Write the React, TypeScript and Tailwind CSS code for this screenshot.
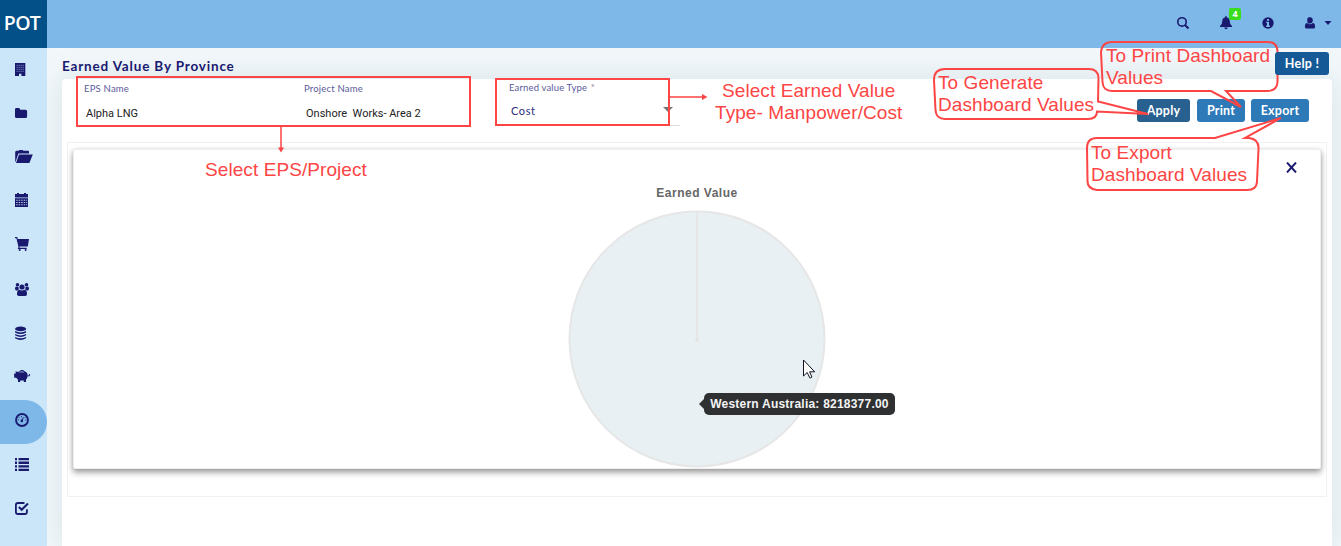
import type { ReactNode } from "react";

const menu: { name: string; art: ReactNode; active?: boolean }[] = [
  {
    name: "Buildings",
    art: (
      <>
        <path d="M15 15h10.3v13H21.4v-2.2h-2.4V28H15z" />
        <g stroke="#cbe6f9" strokeWidth=".9" strokeDasharray=".9 1.1" opacity=".8">
          <path d="M16.7 17.3h7.500M16.7 19.3h7.500M16.7 21.3h7.500M16.7 23.3h7.500" />
        </g>
      </>
    ),
  },
  { name: "Folder", art: <path d="M15 17.4q0-1.4 1.4-1.4h2.4q1.4 0 1.4 1.7h5.4q1.5 0 1.5 1.5v5.3q0 1.5-1.5 1.5h-9.2q-1.4 0-1.4-1.5z" /> },
  {
    name: "Open folder",
    art: <path d="M15.2 26V15.7l1-.9h2.4l.8-.8h3.2l.8.8h5l.6.6v2.2H18.4l-2.8 8.2zM19 18.6h13.8L29.4 27H16z" />,
  },
  {
    name: "Calendar",
    art: (
      <>
        <path d="M15 14h2v-1h2v1h5v-1h2v1h2v3.4H15zM15 18.2h13V27H15z" />
        <g stroke="#cbe6f9" strokeWidth="1.1" strokeDasharray="1.5 1" opacity=".85">
          <path d="M16.2 20.2h11M16.2 22.5h11M16.2 24.8h11" />
        </g>
      </>
    ),
  },
  {
    name: "Cart",
    art: (
      <>
        <path d="M17.3 14.9H29l-1.2 7.600h-8.700z" />
        <path d="M15 13.6h1.8l2.3 9.4-.6 1.4h8.2" fill="none" stroke="currentColor" strokeWidth="1.1" />
        <circle cx="19.7" cy="26" r="1" />
        <circle cx="25.6" cy="26" r="1" />
      </>
    ),
  },
  {
    name: "Users",
    art: (
      <>
        <circle cx="17.5" cy="16.8" r="1.8" />
        <circle cx="26.5" cy="16.8" r="1.8" />
        <circle cx="22" cy="19" r="2.6" />
        <path d="M15 20.5q.2-1.9 1.2-1.9l2.3.4.3 2.6-1.2.8h-1.4q-1.2-.2-1.2-1.9zM29 20.5q-.2-1.9-1.2-1.9l-2.3.4-.3 2.6 1.2.8h1.4q1.2-.2 1.2-1.9zM17 26q0-3.8 2.4-4.2 2.6 1.4 5.2 0Q27 22.200 27 26q0 2-1.700 2h-6.600q-1.700 0-1.700-2z" />
      </>
    ),
  },
  {
    name: "Database",
    art: (
      <>
        <ellipse cx="20.600" cy="16.900" rx="5.500" ry="2.300" />
        <path d="M15.100 19.100q5.500 2.800 11 0v1.300q-5.500 3.400-11 0zM15.100 22q5.500 2.800 11 0v1.300q-5.500 3.400-11 0zM15.100 24.900q5.500 2.800 11 0v1.300q-5.500 3.400-11 0z" />
      </>
    ),
  },
  {
    name: "Savings",
    art: (
      <>
        <path d="M14 17.800l2-.5-.6-2.100 2.500.9q4-2.600 8.200-.1 1.600 1.200 1.600 3.200 0 2.500-1.700 4.200V26h-2.200v-1.500h-3.600V26H18v-2.300l-1.800-1.900H14.300z" />
        <path d="M27.500 19.800q2.600 1 2.200-1.800" fill="none" stroke="currentColor" />
        <path d="M19.500 16.300q2-.9 4.300-.1" fill="none" stroke="#cbe6f9" strokeWidth=".7" />
        <path d="M19.500 14.900q2.500-2 5 0z" />
      </>
    ),
  },
  {
    name: "Dashboard",
    active: true,
    art: (
      <>
        <circle cx="22" cy="20" r="6" fill="none" stroke="currentColor" strokeWidth="1.800" />
        <circle cx="21.800" cy="20.900" r="1.300" />
        <path d="M21.800 20.900l1.600-3.500" fill="none" stroke="currentColor" />
        <path d="M17.600 19.900h1.200M18.800 17.300l.9.900M21.400 16v1.200M24.700 18l.8-.8M25.200 20h1.200" fill="none" stroke="currentColor" strokeWidth=".9" />
      </>
    ),
  },
  {
    name: "List",
    art: (
      <path d="M15 14h2v2.300h-2zM18.500 14H29v2.300H18.500zM15 17.600h2v2.300h-2zM18.500 17.600H29v2.300H18.500zM15 21.200h2v2.300h-2zM18.500 21.200H29v2.300H18.500zM15 24.800h2v2.200h-2zM18.500 24.800H29v2.200H18.500z" />
    ),
  },
  {
    name: "Tasks",
    art: (
      <>
        <path d="M24.500 15H18q-2.100 0-2.100 2.100v6.800q0 2.100 2.100 2.100h6.800q2.100 0 2.100-2.100v-2.600" fill="none" stroke="currentColor" strokeWidth="1.800" />
        <path d="M18.900 18.900l2.800 2.800 6.300-6.100" fill="none" stroke="currentColor" strokeWidth="2.100" />
      </>
    ),
  },
];

function Sidebar() {
  return (
    <nav className="w-[47px] shrink-0 bg-[#cbe6f9]">
      {menu.map((m) => (
        <a
          key={m.name}
          className={
            m.active
              ? "flex h-11 rounded-r-[22px] bg-[#7db8e8] text-[#191970]"
              : "flex h-11 text-[#191970]"
          }
        >
          <svg className="h-11 w-[47px]" viewBox="0 0 47 44" fill="currentColor">
            {m.art}
          </svg>
        </a>
      ))}
    </nav>
  );
}

function Header() {
  return (
    <header className="flex h-12 shrink-0 bg-[#7db8e8]">
      <div className="flex w-[47px] items-center justify-center bg-[#034f87] pr-[3px] pb-0.5 font-['Open_Sans',sans-serif] text-[19.500px] font-semibold tracking-[-0.700px] text-white">
        POT
      </div>
      <div className="flex flex-1 items-center justify-end pb-[2px] text-[#191970]">
        <svg className="mr-[29px] h-3.5 w-3.5" viewBox="0 0 14 14" fill="none" stroke="currentColor">
          <circle cx="6" cy="5.900" r="4.200" strokeWidth="1.600" />
          <path d="M9 9l3.500 3.500" strokeWidth="2" />
        </svg>
        <div className="relative mr-[28px] h-3.5 w-3.5">
          <svg className="h-3.5 w-3.5" viewBox="0 0 14 14" fill="currentColor">
            <path d="M6.400 0h1.200v1.200Q10.600 1.800 10.700 5q.1 3.800 2.300 5v1H1v-1q2.200-1.200 2.300-5 .1-3.200 3.100-3.800zM5.300 11.500h3.400q-.1 1.700-1.700 1.700t-1.700-1.700z" />
          </svg>
          <span className="absolute -top-[8px] left-[10px] flex h-3 w-3 items-center justify-center rounded-[2px] bg-[#39dd1e] font-['Open_Sans',sans-serif] text-[9px] font-bold text-white">
            4
          </span>
        </div>
        <svg className="mr-[28px] h-3.5 w-3.5" viewBox="0 0 14 14">
          <circle cx="7" cy="7" r="5.700" fill="currentColor" />
          <path d="M6 3h2v1.700H6zM5.200 5.700H8v3.900h.9V11H5.100V9.600H6V7h-.8z" fill="#7db8e8" />
        </svg>
        <svg className="mr-[7px] h-3.5 w-3.5" viewBox="0 0 14 14" fill="currentColor">
          <path d="M7 1.300q2.800 0 2.800 2.900T7 7.500 4.200 4.200 7 1.300zM4.100 6.900Q7 9.400 9.900 6.900q2.200.3 2.200 3.800 0 1.900-1.700 1.900H3.600q-1.700 0-1.700-1.900 0-3.500 2.200-3.800z" />
        </svg>
        <svg className="mr-[9px] h-2 w-2" viewBox="0 0 8 8" fill="currentColor">
          <path d="M.5 2h7L4 6z" />
        </svg>
      </div>
    </header>
  );
}

function Filters() {
  return (
    <div className="flex h-[63px] font-['Lato',sans-serif]">
      <div className="flex w-[220px] flex-col pl-[22px]">
        <label className="pt-[4px] text-[9.500px] leading-[11px] tracking-[0.200px] text-[#5a5a9b]">EPS Name</label>
        <span className="pt-[13px] pl-[2px] font-['Roboto',sans-serif] text-[11px] leading-[14px] text-[#222]">Alpha LNG</span>
      </div>
      <div className="mr-[26px] flex h-[47px] w-[189px] flex-col border-b border-[#ddd] pl-[22px]">
        <label className="pt-[4px] text-[9.500px] leading-[11px] tracking-[0.200px] text-[#5a5a9b]">Project Name</label>
        <span className="pt-[13px] pl-[2px] font-['Roboto',sans-serif] text-[11px] leading-[14px] whitespace-pre text-[#222]">
          {"Onshore  Works- Area 2"}
        </span>
      </div>
      <div className="flex h-[47px] w-[183px] flex-col border-b border-[#ddd] pl-[12px]">
        <label className="pt-[3px] text-[9.500px] leading-[11px] tracking-[0.150px] text-[#5a5a9b]">
          Earned value Type <span className="pl-px text-[#8a8a9b]">*</span>
        </label>
        <div className="flex items-center justify-between pt-[10px] pr-[7px] pl-[2px]">
          <span className="text-[11px] leading-[16px] tracking-[0.600px] text-[#2e2e79]">Cost</span>
          <svg className="mb-[4px] h-[5px] w-[10px]" viewBox="0 0 10 5" fill="#757575">
            <path d="M0 0h10L5 5z" />
          </svg>
        </div>
      </div>
      <div className="ml-auto flex gap-[7px] pt-[20px] pr-[23px] text-[12.500px] font-bold tracking-[0.200px] text-white">
        <button className="h-[23px] w-[53px] rounded-[3px] bg-[#286090] pt-[2px]">Apply</button>
        <button className="h-[23px] w-[48px] rounded-[3px] bg-[#2e7ab8] pt-[2px]">Print</button>
        <button className="-ml-px h-[23px] w-[58px] rounded-[3px] bg-[#2e7ab8] pt-[2px]">Export</button>
      </div>
    </div>
  );
}

function ChartCard() {
  return (
    <section className="relative flex h-[320px] flex-col items-center rounded-[2px] border border-[#eee] bg-white shadow-[0_4px_6px_rgba(0,0,0,0.300),0_1px_5px_rgba(0,0,0,0.180)]">
      <svg className="absolute top-[12px] right-[23px] h-[11px] w-[11px]" viewBox="0 0 11 11" fill="none" stroke="#191970" strokeWidth="1.900">
        <path d="M1 .5l9 10M10 .5l-9 10" />
      </svg>
      <h2 className="mt-[35px] text-[12px] leading-[16px] font-bold tracking-[0.500px] text-[#666]">Earned Value</h2>
      <div className="relative mt-[9px] h-[258px] w-[258px]">
        <svg className="h-[258px] w-[258px]" viewBox="0 0 258 258">
          <circle cx="129" cy="129" r="127.500" fill="#e8f0f4" stroke="#e6e6e6" strokeWidth="2" />
          <path d="M129 2v128" stroke="#e6e6e6" strokeWidth="2" />
          <circle cx="129" cy="130" r="1.700" fill="#e2e2e2" />
        </svg>
        <div className="absolute top-[183px] left-[131px] flex items-center">
          <svg className="h-[12px] w-[5px]" viewBox="0 0 5 12" fill="#2f3032">
            <path d="M5 1v10L0 6z" />
          </svg>
          <div className="flex h-[22px] w-[191px] items-center justify-center rounded-[5px] bg-[#2f3032] text-[12px] font-bold whitespace-nowrap text-[#f4f4f4]">
            <span className="tracking-[0.220px]">Western Australia: 8218377.00</span>
          </div>
        </div>
        <svg className="absolute top-[149px] left-[235px] h-[20px] w-[13px]" viewBox="0 0 13 20">
          <path d="M.5 1v16l3.700-3.500 2.500 5.300q1.300.6 2.200-.8l-2.300-5.200h5.100z" fill="#fff" stroke="#111122" />
        </svg>
      </div>
    </section>
  );
}

function Note({ className, children }: { className: string; children: ReactNode }) {
  return <p className={"absolute text-[19px] leading-[22px] tracking-[0.080px] whitespace-nowrap text-[#fd4545] " + className}>{children}</p>;
}

function Annotations() {
  return (
    <div className="pointer-events-none absolute inset-0">
      <svg className="h-[546px] w-[1341px]" viewBox="0 0 1341 546" fill="none" stroke="#fd4545" strokeWidth="2">
        <path d="M77 77h393v49H77zM496 79h173v46H496z" />
        <path d="M281 125v24M668 97h34" strokeWidth="1.500" />
        <path d="M278 147.500h6l-3 5zM702 94v6l5.500-3z" fill="#fd4545" stroke="none" />
        <path d="M945 69H1089Q1098 69 1098.500 78L1098 101.500 1148 114 1097 111.500Q1097 119 1088 119H945Q936 119 935.500 110L934 80Q934 69 945 69z" />
        <path d="M1112 42H1268Q1277 42 1277.500 51V82Q1277 91 1267 91H1226L1241 107 1211 91H1112Q1103 91 1102.500 82L1101 52Q1102 42 1112 42z" />
        <path d="M1097 138H1215L1281 118 1245 138H1249Q1259 139 1258.500 149L1257 181Q1257 190 1247 190H1097Q1087 189 1087.500 180L1087 148Q1087 138 1097 138z" />
      </svg>
      <Note className="top-[159px] left-[205px]">Select EPS/Project</Note>
      <Note className="top-[80px] left-[715px] text-center">
        Select Earned Value
        <br />
        Type- Manpower/Cost
      </Note>
      <Note className="top-[72px] left-[938px]">
        To Generate
        <br />
        Dashboard Values
      </Note>
      <Note className="top-[45px] left-[1106px]">
        To Print Dashboard
        <br />
        Values
      </Note>
      <Note className="top-[142px] left-[1091px]">
        To Export
        <br />
        Dashboard Values
      </Note>
    </div>
  );
}

export default function App() {
  return (
    <div className="relative flex h-[546px] w-full flex-col overflow-hidden bg-[#f2f7fa] font-['Liberation_Sans',Arial,sans-serif]">
      <Header />
      <div className="flex min-h-0 flex-1">
        <Sidebar />
        <main className="flex min-w-0 flex-1 flex-col overflow-hidden pr-[9px] pl-[15px]">
          <div className="relative z-10 flex h-[31px] shrink-0 items-center justify-between font-['Lato',sans-serif]">
            <h1 className="pt-[5px] text-[13.500px] font-bold tracking-[0.830px] text-[#191970]">Earned Value By Province</h1>
            <button className="mr-[3px] h-[23px] w-[54px] rounded-[3px] bg-[#155a96] pt-px text-[12.500px] font-bold tracking-[0.250px] text-white">
              Help !
            </button>
          </div>
          <div className="flex flex-1 flex-col rounded-t-[4px] bg-white shadow-[0_0_30px_rgba(120,160,170,0.220)]">
            <Filters />
            <div className="mx-[5px] h-[355px] border border-[#f1f1f1] px-[5px] pt-[6px]">
              <ChartCard />
            </div>
          </div>
        </main>
      </div>
      <Annotations />
    </div>
  );
}
